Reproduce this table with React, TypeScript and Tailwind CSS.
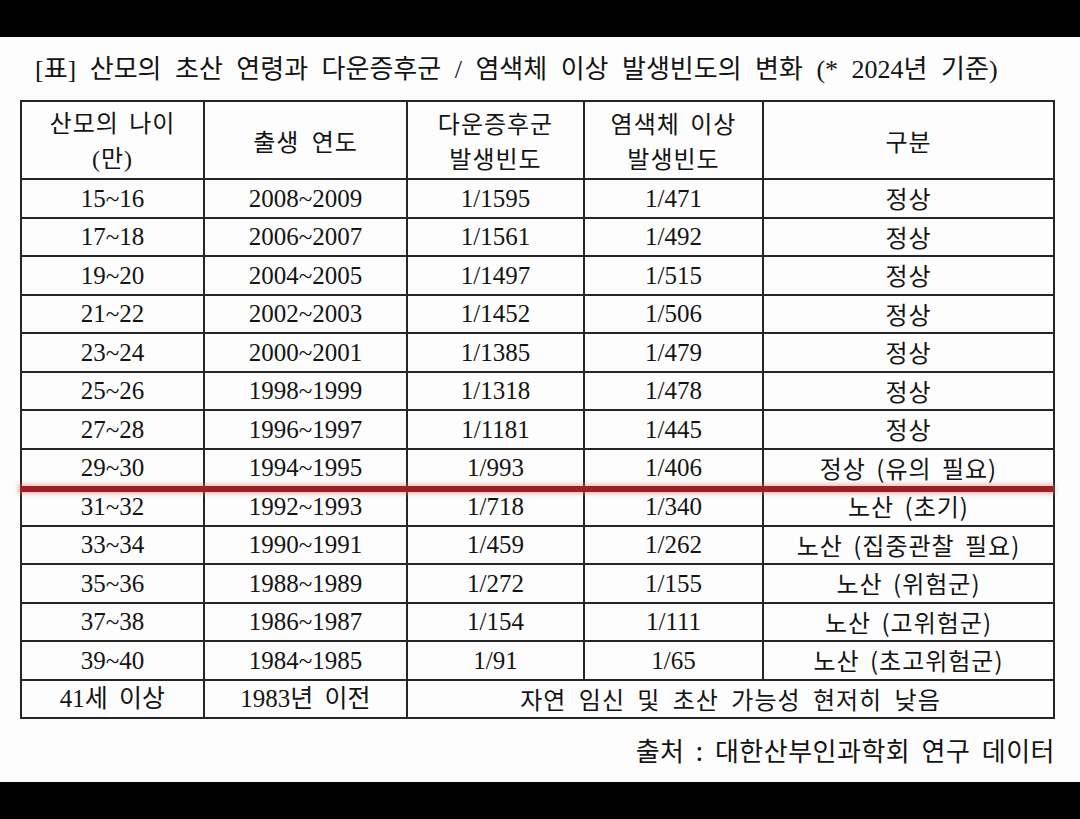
import React from 'react';

const rows = [
  ['15~16', '2008~2009', '1/1595', '1/471', '정상'],
  ['17~18', '2006~2007', '1/1561', '1/492', '정상'],
  ['19~20', '2004~2005', '1/1497', '1/515', '정상'],
  ['21~22', '2002~2003', '1/1452', '1/506', '정상'],
  ['23~24', '2000~2001', '1/1385', '1/479', '정상'],
  ['25~26', '1998~1999', '1/1318', '1/478', '정상'],
  ['27~28', '1996~1997', '1/1181', '1/445', '정상'],
  ['29~30', '1994~1995', '1/993', '1/406', '정상 (유의 필요)'],
  ['31~32', '1992~1993', '1/718', '1/340', '노산 (초기)'],
  ['33~34', '1990~1991', '1/459', '1/262', '노산 (집중관찰 필요)'],
  ['35~36', '1988~1989', '1/272', '1/155', '노산 (위험군)'],
  ['37~38', '1986~1987', '1/154', '1/111', '노산 (고위험군)'],
  ['39~40', '1984~1985', '1/91', '1/65', '노산 (초고위험군)'],
];

const cell = 'border-2 border-[#262626] p-0 text-center align-middle';
const kr = "font-['Noto_Sans_CJK_KR',sans-serif] font-normal";

export default function App() {
  return (
    <div className="flex h-[819px] w-[1080px] flex-col bg-black font-['Liberation_Serif','Noto_Sans_CJK_KR',serif] text-[#141414]">
      <div className="h-[37px] shrink-0" />
      <div className="flex h-[745px] shrink-0 flex-col bg-[#fdfdfd]">
        <div className="flex h-[63px] items-center pl-[35px] pt-[2px] text-[26px] whitespace-pre [word-spacing:7px]">
          [표] 산모의 초산 연령과 다운증후군 / 염색체 이상 발생빈도의 변화 (* 2024년 기준)
        </div>
        <div className="relative ml-[20px] w-[1033px]">
          <table className="w-[1033px] table-fixed border-collapse border-2 border-[#262626] text-[25px] leading-none">
            <colgroup>
              <col className="w-[183px]" />
              <col className="w-[203px]" />
              <col className="w-[177px]" />
              <col className="w-[179px]" />
              <col className="w-[291px]" />
            </colgroup>
            <thead>
              <tr className="h-[78px] font-['Noto_Sans_CJK_KR',sans-serif] text-[24px] leading-[35px] tracking-[1px]">
                <th className={cell + ' font-normal [word-spacing:4px]'}>
                  산모의 나이
                  <br />
                  <span className="font-['Liberation_Serif','Noto_Sans_CJK_KR',serif]">(만)</span>
                </th>
                <th className={cell + ' font-normal [word-spacing:6px]'}>출생 연도</th>
                <th className={cell + ' font-normal'}>
                  다운증후군
                  <br />
                  발생빈도
                </th>
                <th className={cell + ' font-normal [word-spacing:4px]'}>
                  염색체 이상
                  <br />
                  발생빈도
                </th>
                <th className={cell + ' font-normal'}>구분</th>
              </tr>
            </thead>
            <tbody>
              {rows.map((r) => (
                <tr key={r[0]} className="h-[38.5px]">
                  <td className={cell}>{r[0]}</td>
                  <td className={cell}>{r[1]}</td>
                  <td className={cell}>{r[2]}</td>
                  <td className={cell}>{r[3]}</td>
                  <td className={cell + ' ' + kr + ' text-[24px] tracking-[1px] [word-spacing:4px]'}>{r[4]}</td>
                </tr>
              ))}
              <tr className="h-[38.5px]">
                <td className={cell + ' [word-spacing:5px]'}>41세 이상</td>
                <td className={cell + ' [word-spacing:5px]'}>1983년 이전</td>
                <td className={cell + ' ' + kr + ' text-[24px] tracking-[1px] [word-spacing:6px]'} colSpan={3}>
                  자연 임신 및 초산 가능성 현저히 낮음
                </td>
              </tr>
            </tbody>
          </table>
          <div className="absolute left-0 right-0 top-[386px] h-[6px] bg-[#9e2025] shadow-[0_0_4px_2px_rgba(220,120,120,0.5)]" />
        </div>
        <div className="flex flex-1 items-center justify-end pr-[25px] pb-[2px] font-['Noto_Sans_CJK_KR',sans-serif] text-[26px] tracking-[0.5px] [word-spacing:5px]">
          출처 : 대한산부인과학회 연구 데이터
        </div>
      </div>
      <div className="flex-1" />
    </div>
  );
}
